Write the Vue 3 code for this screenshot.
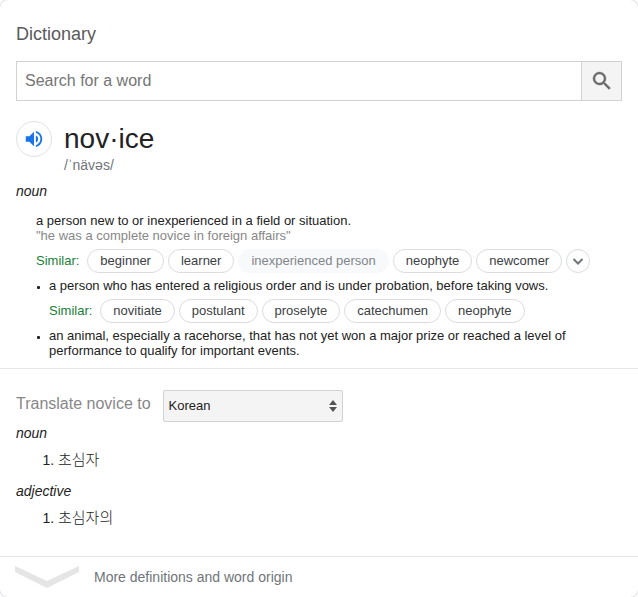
<script setup>
import { ref } from 'vue'

const query = ref('')
const language = ref('Korean')
const languages = ['Korean', 'Japanese', 'Spanish', 'French', 'German']

const senses = [
  {
    text: 'a person new to or inexperienced in a field or situation.',
    example: '"he was a complete novice in foreign affairs"',
    similar: [
      { word: 'beginner' },
      { word: 'learner' },
      { word: 'inexperienced person', muted: true },
      { word: 'neophyte' },
      { word: 'newcomer' },
    ],
    more: true,
    plain: true,
  },
  {
    text: 'a person who has entered a religious order and is under probation, before taking vows.',
    similar: [
      { word: 'novitiate' },
      { word: 'postulant' },
      { word: 'proselyte' },
      { word: 'catechumen' },
      { word: 'neophyte' },
    ],
  },
  {
    text: 'an animal, especially a racehorse, that has not yet won a major prize or reached a level of performance to qualify for important events.',
    similar: [],
  },
]

const translations = [
  { part: 'noun', words: ['초심자'] },
  { part: 'adjective', words: ['초심자의'] },
]
</script>

<template>
  <main class="card">
    <section class="entry">
      <h1 class="title">Dictionary</h1>

      <form class="search" @submit.prevent>
        <input v-model="query" class="search-input" type="text" placeholder="Search for a word" aria-label="Search for a word" />
        <button class="search-button" type="submit" aria-label="Search">
          <svg width="24" height="24" viewBox="0 0 24 24" fill="#6a6a6a" stroke="#6a6a6a" stroke-width="0.4">
            <path d="M15.5 14h-.79l-.28-.27A6.47 6.47 0 0 0 16 9.5 6.5 6.5 0 1 0 9.5 16c1.61 0 3.09-.59 4.23-1.57l.27.28v.79l5 4.99L20.49 19l-4.99-5zm-6 0C7.01 14 5 11.99 5 9.5S7.01 5 9.5 5 14 7.01 14 9.5 11.99 14 9.5 14z" />
          </svg>
        </button>
      </form>

      <div class="headword">
        <button class="listen" type="button" aria-label="Listen">
          <svg width="22" height="22" viewBox="0 0 24 24" fill="#1a73e8">
            <path d="M3 9v6h4l5 5V4L7 9H3zm13.5 3c0-1.77-1.02-3.29-2.5-4.03v8.05c1.48-.73 2.5-2.25 2.5-4.02zM14 3.23v2.06c2.89.86 5 3.54 5 6.71s-2.11 5.85-5 6.71v2.06c4.01-.91 7-4.49 7-8.77s-2.99-7.86-7-8.77z" />
          </svg>
        </button>
        <div>
          <h2 class="word">nov·ice</h2>
          <div class="phonetic">/ˈnävəs/</div>
        </div>
      </div>

      <div class="part">noun</div>

      <ul class="senses">
        <li v-for="sense in senses" :key="sense.text" class="sense" :class="{ plain: sense.plain }">
          <p class="definition">{{ sense.text }}</p>
          <p v-if="sense.example" class="example">{{ sense.example }}</p>
          <div v-if="sense.similar.length" class="similar">
            <span class="similar-label">Similar:</span>
            <button v-for="item in sense.similar" :key="item.word" class="chip" :class="{ muted: item.muted }" type="button" :disabled="item.muted">{{ item.word }}</button>
            <button v-if="sense.more" class="expand" type="button" aria-label="More similar words">
              <svg width="16" height="16" viewBox="0 0 16 16" fill="none" stroke="#70757a" stroke-width="2">
                <path d="M3.5 6 8 10.500 12.500 6" />
              </svg>
            </button>
          </div>
        </li>
      </ul>
    </section>

    <section class="translate">
      <div class="translate-row">
        <label class="translate-label" for="language">Translate novice to</label>
        <div class="picker">
          <select id="language" v-model="language" class="select">
            <option v-for="name in languages" :key="name">{{ name }}</option>
          </select>
          <svg class="arrows" width="8" height="12" viewBox="0 0 8 12" fill="#555">
            <path d="M4 0 8 5H0zM4 12 0 7h8z" />
          </svg>
        </div>
      </div>

      <div v-for="group in translations" :key="group.part" class="group">
        <div class="part">{{ group.part }}</div>
        <ol class="words">
          <li v-for="word in group.words" :key="word"><span class="korean" lang="ko">{{ word }}</span></li>
        </ol>
      </div>
    </section>

    <a class="more" href="#more">
      <svg width="64" height="22" viewBox="0 0 64 22" fill="#e5e5e5">
        <path d="M0 0 32 15 64 0v6L32 22 0 6z" />
      </svg>
      <span>More definitions and word origin</span>
    </a>
  </main>
</template>

<style>
body {
  margin: 0;
  background: #fff;
}
</style>

<style scoped>
.card {
  position: relative;
  overflow: hidden;
  background: #fff;
  color: #222;
  font-family: "Liberation Sans", "Noto Sans CJK KR", sans-serif;
  font-size: 13px;
}

/* Rounded outline that only shows at the corners */
.card::after {
  content: "";
  position: absolute;
  inset: -1px;
  border: 1px solid #dadce0;
  border-radius: 9px;
  pointer-events: none;
}

button,
input,
select {
  font-family: inherit;
}

.entry {
  padding: 24px 16px 10px;
}

.title {
  margin: 0;
  font-size: 18px;
  line-height: 20px;
  font-weight: 400;
  color: #5a5a5a;
}

.search {
  display: flex;
  height: 40px;
  margin-top: 17px;
  box-sizing: border-box;
  border: 1px solid #d2d2d2;
}

.search-input {
  flex: 1;
  min-width: 0;
  padding: 0 8px;
  border: 0;
  background: #fff;
  font-size: 16px;
  color: #222;
  outline: none;
}

.search-input::placeholder {
  color: #757575;
  opacity: 1;
}

.search-button {
  display: flex;
  align-items: center;
  justify-content: center;
  width: 40px;
  padding: 0;
  border: 0;
  border-left: 1px solid #d2d2d2;
  background: #f4f4f4;
}

.headword {
  display: flex;
  align-items: flex-start;
  gap: 12px;
  margin-top: 20px;
}

.listen {
  display: flex;
  align-items: center;
  justify-content: center;
  width: 36px;
  height: 36px;
  padding: 0;
  border: 1px solid #dfe1e5;
  border-radius: 50%;
  background: #fff;
}

.word {
  margin: 0;
  font-size: 28px;
  line-height: 36px;
  font-weight: 400;
}

.phonetic {
  font-size: 14px;
  line-height: 16px;
  color: #70757a;
}

.part {
  font-size: 14px;
  line-height: 16px;
  font-style: italic;
}

.entry .part {
  margin-top: 10px;
}

.senses {
  margin: 14px 0 0;
  padding: 0 0 0 20px;
  list-style: none;
}

.sense {
  position: relative;
  padding-left: 13px;
}

.sense.plain {
  padding-left: 0;
}

.sense:not(.plain)::before {
  content: "";
  position: absolute;
  top: 8px;
  left: 1px;
  width: 3px;
  height: 3px;
  border-radius: 1px;
  background: #222;
}

.definition,
.example {
  margin: 0;
  font-size: 13px;
  line-height: 15px;
}

.example {
  color: #878787;
}

.similar {
  display: flex;
  flex-wrap: wrap;
  align-items: center;
  gap: 4px;
  padding: 6px 0 5px;
}

.similar-label {
  margin-right: 4px;
  padding-bottom: 2px;
  color: #188038;
}

.chip,
.expand {
  height: 24px;
  box-sizing: border-box;
  border: 1px solid #dadce0;
  border-radius: 12px;
  background: #fff;
  color: #3c4043;
}

.chip {
  padding: 0 12px 2px;
  font-size: 13px;
}

.chip.muted {
  border-color: #f8f9fa;
  background: #f8f9fa;
  color: #80868b;
}

.expand {
  display: flex;
  align-items: center;
  justify-content: center;
  width: 24px;
  padding: 0;
}

.translate {
  padding: 21px 16px 15px;
  border-top: 1px solid #e5e5e5;
}

.translate-row {
  display: flex;
  align-items: center;
  gap: 12px;
  margin-bottom: 3px;
}

.translate-label {
  padding-bottom: 4px;
  font-size: 16px;
  line-height: 20px;
  color: #878787;
}

.picker {
  position: relative;
  width: 180px;
}

.select {
  display: block;
  width: 100%;
  height: 32px;
  padding: 0 20px 2px 5px;
  border: 1px solid #d2d2d2;
  border-radius: 2px;
  background: #f4f4f4;
  color: #222;
  font-size: 13px;
  appearance: none;
}

.arrows {
  position: absolute;
  top: 10px;
  right: 6px;
  pointer-events: none;
}

.words {
  margin: 10px 0 14px;
  padding-left: 42px;
  font-size: 14px;
  line-height: 18px;
}

.korean {
  font-size: 15px;
  font-weight: 300;
}

.more {
  display: flex;
  align-items: center;
  gap: 15px;
  padding: 9px 15px;
  border-top: 1px solid #e5e5e5;
  color: #70757a;
  font-size: 14px;
  text-decoration: none;
}
</style>
